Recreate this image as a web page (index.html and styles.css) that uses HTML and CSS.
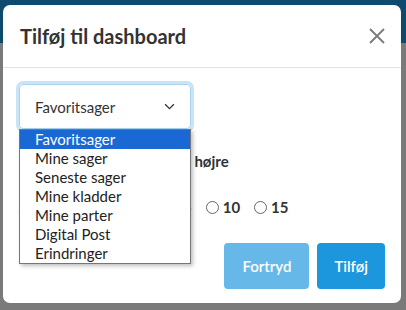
FILE: index.html
```html
<!DOCTYPE html>
<html>
<head>
    <title>Tilføj til dashboard</title>
    <link rel="stylesheet" href="styles.css">
</head>
<body>
    <div class="modal">
        <div class="modal-header">
            <h1 class="modal-title">Tilføj til dashboard</h1>
            <button class="close-modal" title="Luk">
                <svg viewBox="0 0 16 16" xmlns="http://www.w3.org/2000/svg">
                    <path d="M1 1L15 15M15 1L1 15"/>
                </svg>
            </button>
        </div>

        <div class="modal-body">
            <div class="select-wrap">
                <div class="select-box">
                    <span>Favoritsager</span>
                    <svg class="chevron" viewBox="0 0 12 8" xmlns="http://www.w3.org/2000/svg">
                        <path d="M1 1.5L6 6.5L11 1.5"/>
                    </svg>
                </div>
                <ul class="option-list">
                    <li class="option selected">Favoritsager</li>
                    <li class="option">Mine sager</li>
                    <li class="option">Seneste sager</li>
                    <li class="option">Mine kladder</li>
                    <li class="option">Mine parter</li>
                    <li class="option">Digital Post</li>
                    <li class="option">Erindringer</li>
                </ul>
            </div>

            <div class="field-label">Placering i kolonne ude til højre</div>

            <div class="radio-row">
                <span class="radio-title">Antal</span>
                <label class="radio"><span class="dot"></span>5</label>
                <label class="radio"><span class="dot"></span>10</label>
                <label class="radio"><span class="dot"></span>15</label>
            </div>
        </div>

        <div class="modal-footer">
            <button class="btn btn-light">Fortryd</button>
            <button class="btn btn-primary">Tilføj</button>
        </div>
    </div>
</body>
</html>
```

FILE: styles.css
```css
html, body {
    height: 100%;
}
body {
    margin: 0;
    background: linear-gradient(#0e4a6e 0, #0e4a6e 43px, #7a7a7a 43px);
    font-family: Lato, 'Liberation Sans', Arial, sans-serif;
    color: #333;
    overflow: hidden;
}
.modal {
    margin: 5px 0 0 3px;
    width: 398px;
    height: 298px;
    background: #fff;
    border-radius: 7px;
    display: flex;
    flex-direction: column;
    box-sizing: border-box;
}
.modal-header {
    display: flex;
    align-items: center;
    justify-content: space-between;
    height: 63px;
    padding: 0 16px 0 17px;
    border-bottom: 1px solid #e3e3e3;
    box-sizing: border-box;
}
.modal-title {
    margin: 0;
    font-size: 20px;
    font-weight: 700;
    color: #333;
}
.close-modal {
    background: none;
    border: none;
    padding: 0;
    width: 16px;
    height: 16px;
    cursor: pointer;
    display: flex;
}
.close-modal svg {
    width: 16px;
    height: 16px;
    stroke: #7a7a7a;
    stroke-width: 1.8;
    fill: none;
}

/* Body */
.modal-body {
    flex: 1;
    padding: 16px 16px 0 16px;
}
.select-wrap {
    position: relative;
    width: 172px;
}
.select-box {
    display: flex;
    align-items: center;
    justify-content: space-between;
    height: 45px;
    padding: 0 15px 0 15px;
    border: 1px solid #a9d3ee;
    border-radius: 4px;
    box-shadow: 0 0 0 3px #c8e4f6;
    font-size: 15px;
    color: #333;
    box-sizing: border-box;
}
.chevron {
    width: 11px;
    height: 7px;
    stroke: #333;
    stroke-width: 1.5;
    fill: none;
}
.option-list {
    position: absolute;
    left: 0;
    top: 45px;
    width: 172px;
    margin: 0;
    padding: 0;
    list-style: none;
    background: #fff;
    border: 1px solid #767676;
    box-shadow: 2px 2px 4px rgba(0, 0, 0, 0.25);
    box-sizing: border-box;
    z-index: 10;
}
.option {
    height: 19px;
    line-height: 19px;
    padding-left: 15px;
    font-size: 15px;
    color: #222;
}
.option.selected {
    background: #1a68d4;
    color: #fff;
}
.field-label {
    margin-top: 23px;
    font-size: 15px;
    line-height: 18px;
    font-weight: 700;
    color: #333;
}
.radio-row {
    display: flex;
    align-items: center;
    gap: 14px;
    margin-top: 28px;
    height: 18px;
}
.radio-title {
    flex: 0 0 133px;
    font-size: 15px;
    font-weight: 700;
}
.radio {
    display: flex;
    align-items: center;
    gap: 4px;
    font-size: 15px;
    font-weight: 700;
    color: #333;
}
.dot {
    width: 11px;
    height: 11px;
    border: 1px solid #666;
    border-radius: 50%;
}

/* Footer */
.modal-footer {
    display: flex;
    justify-content: flex-end;
    gap: 8px;
    padding: 0 16px 14px 16px;
}
.btn {
    height: 46px;
    border: none;
    border-radius: 4px;
    color: #fff;
    font-family: Lato, 'Liberation Sans', Arial, sans-serif;
    font-size: 15px;
    font-weight: 600;
    cursor: pointer;
}
.btn-light {
    background: #66b8e8;
    padding: 0 18px;
}
.btn-primary {
    background: #1c96dc;
    padding: 0 17px;
}
```
